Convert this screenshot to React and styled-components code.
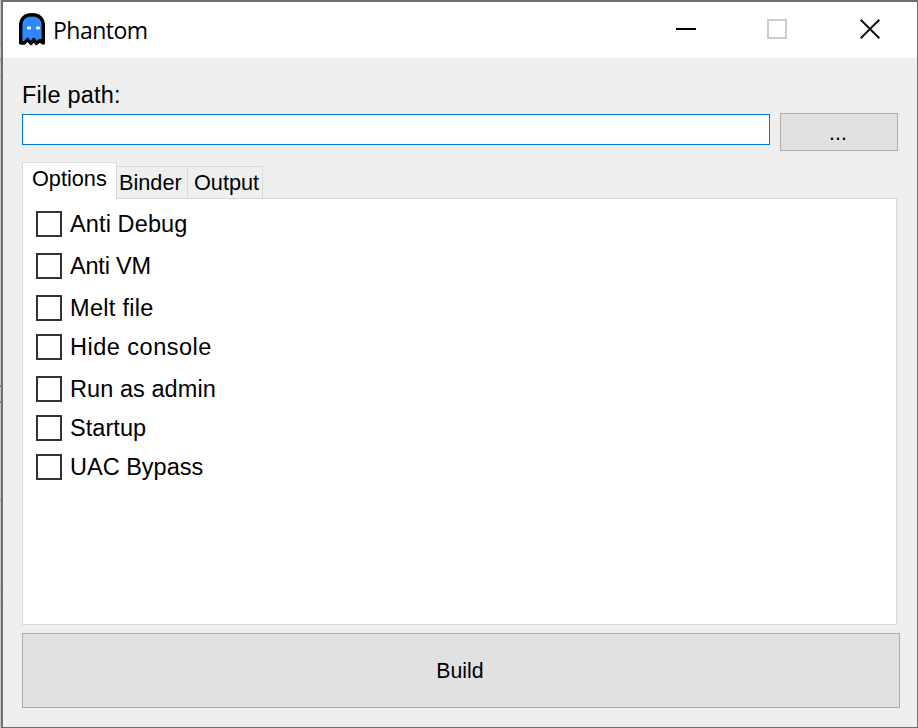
import React from "react";
import styled, { createGlobalStyle } from "styled-components";

const Global = createGlobalStyle`
  * { box-sizing: border-box; }
  body { margin: 0; overflow: hidden; font-family: "Liberation Sans", Arial, sans-serif; color: #000; }
`;

const Desktop = styled.div`
  width: 918px;
  height: 728px;
  padding-left: 1px;
  background: linear-gradient(
    #c9c9c9 43px, #b4b9c3 43px 47px, #c9c9c9 47px 58px, #8fb8d2 58px 62px, #c9c9c9 62px 73px,
    #b4b9c3 73px 77px, #c9c9c9 77px 385px,
    #3a9dc4 385px 387px, #c9c9c9 387px 401px, #3a9dc4 401px 403px, #c9c9c9 403px 499px,
    #6fbccb 499px 501px, #c9c9c9 501px 590px, #8fb8d2 590px 591px, #c9c9c9 591px 602px,
    #8fb8d2 602px 603px, #c9c9c9 603px
  );
`;

const Window = styled.main`
  display: flex;
  flex-direction: column;
  width: 917px;
  height: 728px;
  border: solid #6f6f6f;
  border-width: 2px 1px 1px 2px;
  background: #efefef;
`;

const TitleBar = styled.header`
  display: flex;
  height: 56px;
  flex: none;
  background: #fff;
  padding-left: 15px;
`;

const GhostIcon = styled.svg`
  width: 28px;
  height: 34px;
  margin-top: 10px;
`;

const Title = styled.h1`
  margin: 0 auto 0 7px;
  font: 400 23px/56px "Open Sans", "Noto Sans", sans-serif;
  letter-spacing: -0.5px;
`;

const CaptionButtons = styled.div`
  display: flex;
  align-items: center;
  gap: 71px;
  padding: 0 37px 2px 0;
`;

const Caption = styled.button`
  width: 20px;
  height: 20px;
  margin-right: ${(p) => p.$after || 0}px;
  padding: 0;
  border: 0;
  background: none;

  svg { display: block; }
`;

const Content = styled.div`
  padding: 22px 17px 0 19px;
`;

const FileLabel = styled.label`
  display: block;
  font-size: 23.5px;
  line-height: 30px;
  letter-spacing: 0.2px;
`;

const FileRow = styled.div`
  display: flex;
  align-items: flex-start;
  gap: 10px;
  margin-top: 3px;
`;

const PathInput = styled.input`
  width: 748px;
  height: 31px;
  margin-top: 1px;
  border: 1px solid #0078d7;
  border-radius: 0;
  outline: 0;
  padding: 0 4px;
  background: #fff;
`;

const PushButton = styled.button`
  width: ${(p) => p.$width}px;
  height: ${(p) => p.$height}px;
  padding: ${(p) => p.$drop || 0}px 2px 0 0;
  border: 1px solid #adadad;
  background: #e1e1e1;
  color: #000;
  font: 21.3px "Liberation Sans", Arial, sans-serif;
`;

const Tabs = styled.nav`
  display: flex;
  align-items: flex-end;
  height: 37px;
  margin-top: 11px;
`;

const Tab = styled.button`
  height: ${(p) => (p.$active ? 37 : 33)}px;
  width: ${(p) => p.$width}px;
  padding: 0 0 ${(p) => (p.$active ? 5 : 0)}px ${(p) => p.$inset}px;
  border: 1px solid #d9d9d9;
  border-width: ${(p) => (p.$active ? "1px 1px 0" : "1px 1px 1px 0")};
  background: ${(p) => (p.$active ? "#fff" : "#efefef")};
  color: #000;
  text-align: left;
  white-space: nowrap;
  font: 21.7px "Liberation Sans", Arial, sans-serif;
`;

const TabRule = styled.span`
  flex: none;
  width: 634px;
  height: 1px;
  background: #d9d9d9;
`;

const Panel = styled.section`
  width: 875px;
  height: 426px;
  border: 1px solid #d9d9d9;
  border-top: 0;
  background: #fff;
  padding: 12px 13px;
  display: flex;
  flex-direction: column;
  margin-bottom: 8px;
`;

const Option = styled.label`
  display: flex;
  align-items: center;
  height: 26px;
  margin-bottom: ${(p) => p.$gap}px;
  font-size: 23.5px;
  line-height: 26px;
  letter-spacing: ${(p) => p.$spacing}px;
`;

const CheckBox = styled.input`
  appearance: none;
  width: 26px;
  height: 26px;
  margin: 0 8px 0 0;
  border: 2px solid #333;
  background: #fff;
`;

const options = [
  ["Anti Debug", 16, 0.12],
  ["Anti VM", 16, -0.2],
  ["Melt file", 13, 0.3],
  ["Hide console", 16, 0.5],
  ["Run as admin", 13, 0.07],
  ["Startup", 13, 0.05],
  ["UAC Bypass", 0, 0],
];

export default function App() {
  return (
    <Desktop>
      <Global />
      <Window>
        <TitleBar>
          <GhostIcon viewBox="0 0 28 34">
            <path
              d="M2.7 31V13.5C2.7 6.5 7 2.7 14 2.7S25.3 6.5 25.3 13.5V31L21.8 28.5L18.3 31.5L15.8 27.5L13 31.5L9.5 27.5L6.5 31Z"
              fill="#2f88ff" stroke="#000" strokeWidth="3.4" strokeLinejoin="round"
            />
            <rect x="9" y="14.5" width="4" height="3" rx="1" fill="#e8ffff" />
            <rect x="18" y="14.5" width="4" height="3" rx="1" fill="#e8ffff" />
          </GhostIcon>
          <Title>Phantom</Title>
          <CaptionButtons>
            <Caption aria-label="Minimize">
              <svg width="20" height="20"><path d="M0 10H20" stroke="#000" strokeWidth="2" /></svg>
            </Caption>
            <Caption aria-label="Maximize" $after={2} disabled>
              <svg width="20" height="20"><path d="M1 1H19V19H1Z" fill="none" stroke="#ccc" strokeWidth="2" /></svg>
            </Caption>
            <Caption aria-label="Close">
              <svg width="20" height="20"><path d="M.7 .7L19.3 19.3M19.3 .7L.7 19.3" stroke="#111" strokeWidth="2" /></svg>
            </Caption>
          </CaptionButtons>
        </TitleBar>
        <Content>
          <FileLabel htmlFor="path">File path:</FileLabel>
          <FileRow>
            <PathInput id="path" />
            <PushButton $width={118} $height={38} $drop={3}>...</PushButton>
          </FileRow>
          <Tabs>
            <Tab $active $width={95} $inset={9}>Options</Tab>
            <Tab $width={71} $inset={2}>Binder</Tab>
            <Tab $width={75} $inset={6}>Output</Tab>
            <TabRule />
          </Tabs>
          <Panel>
            {options.map(([name, gap, spacing]) => (
              <Option key={name} $gap={gap} $spacing={spacing}>
                <CheckBox type="checkbox" />
                {name}
              </Option>
            ))}
          </Panel>
          <PushButton $width={878} $height={75} $drop={2}>Build</PushButton>
        </Content>
      </Window>
    </Desktop>
  );
}
